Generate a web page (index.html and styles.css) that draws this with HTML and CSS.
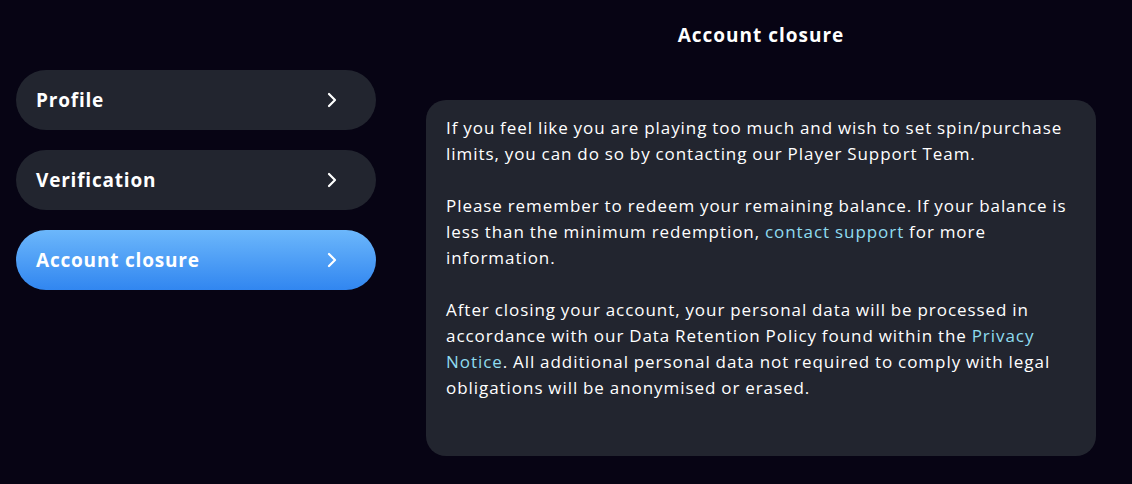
FILE: index.html
```html
<!DOCTYPE html>
<html lang="en">
<head>
<meta charset="utf-8">
<title>Account closure</title>
<link rel="stylesheet" href="styles.css">
</head>
<body>
<div class="page">
  <nav class="sidebar">
    <a class="nav-item" href="#">
      <span>Profile</span>
      <svg class="chev" width="10" height="16" viewBox="0 0 10 16"><path d="M2 2 L8 8 L2 14" fill="none" stroke="#fff" stroke-width="2.2" stroke-linecap="round" stroke-linejoin="round"/></svg>
    </a>
    <a class="nav-item" href="#">
      <span>Verification</span>
      <svg class="chev" width="10" height="16" viewBox="0 0 10 16"><path d="M2 2 L8 8 L2 14" fill="none" stroke="#fff" stroke-width="2.2" stroke-linecap="round" stroke-linejoin="round"/></svg>
    </a>
    <a class="nav-item active" href="#">
      <span>Account closure</span>
      <svg class="chev" width="10" height="16" viewBox="0 0 10 16"><path d="M2 2 L8 8 L2 14" fill="none" stroke="#fff" stroke-width="2.2" stroke-linecap="round" stroke-linejoin="round"/></svg>
    </a>
  </nav>
  <main class="content">
    <h1 class="title">Account closure</h1>
    <section class="panel">
      <p>If you feel like you are playing too much and wish to set spin/purchase limits, you can do so by contacting our Player Support Team.</p>
      <p>Please remember to redeem your remaining balance. If your balance is less than the minimum redemption, <a href="#" class="link">contact support</a> for more information.</p>
      <p>After closing your account, your personal data will be processed in accordance with our Data Retention Policy found within the <a href="#" class="link">Privacy Notice</a>. All additional personal data not required to comply with legal obligations will be anonymised or erased.</p>
    </section>
  </main>
</div>
</body>
</html>
```

FILE: styles.css
```css
html, body {
  margin: 0;
  padding: 0;
  background: #070414;
}
body {
  font-family: "Open Sans", "Liberation Sans", sans-serif;
  color: #ffffff;
  height: 484px;
  overflow: hidden;
}
.page {
  display: flex;
  align-items: flex-start;
  padding-left: 16px;
}
.sidebar {
  width: 360px;
  display: flex;
  flex-direction: column;
  gap: 20px;
  padding-top: 70px;
}
.nav-item {
  height: 60px;
  box-sizing: border-box;
  border-radius: 30px;
  background: #22252f;
  display: flex;
  align-items: center;
  justify-content: space-between;
  padding: 0 39px 0 20px;
  color: #fff;
  text-decoration: none;
  font-weight: 700;
  font-size: 19px;
  letter-spacing: 0.8px;
}
.nav-item.active {
  background: linear-gradient(180deg, #6cb7fb 0%, #3186f0 100%);
}
.chev {
  display: block;
}
.content {
  margin-left: 50px;
  width: 670px;
  display: flex;
  flex-direction: column;
}
.title {
  margin: 0;
  padding-top: 21px;
  line-height: 28px;
  font-size: 19px;
  font-weight: 700;
  letter-spacing: 1px;
  text-align: center;
}
.panel {
  margin-top: 51px;
  height: 356px;
  box-sizing: border-box;
  background: #22252f;
  border-radius: 20px;
  padding: 15px 20px;
  font-size: 17px;
  line-height: 26px;
  letter-spacing: 0.95px;
  word-spacing: -0.5px;
}
.panel p {
  margin: 0 0 26px 0;
}
.panel p:last-child {
  margin-bottom: 0;
}
.link {
  color: #8fdcf0;
  text-decoration: none;
}
```
